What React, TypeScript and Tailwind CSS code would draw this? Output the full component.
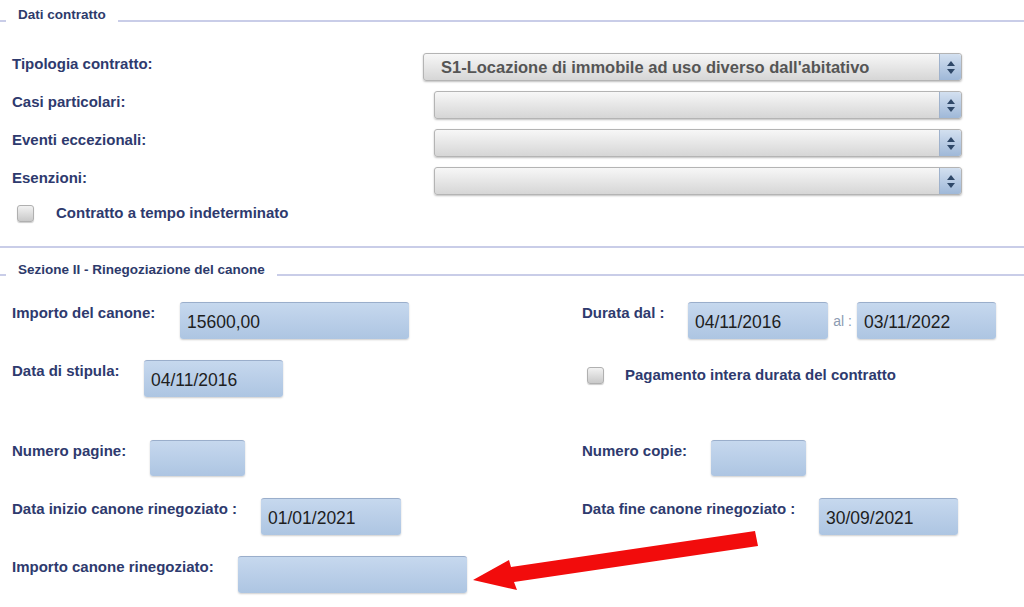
const font = { fontFamily: '"Liberation Sans", Arial, sans-serif' };

function Legend({ text, top, line }: { text: string; top: string; line: string }) {
  return (
    <div className="flex h-[28px] items-start">
      <div className={`${line} h-[2px] w-[6px] bg-[#c9cde8]`} />
      <div className={`${top} px-3 text-[13.5px] font-bold leading-[14px] text-[#2d3a6b]`}>{text}</div>
      <div className={`${line} h-[2px] flex-1 bg-[#c9cde8]`} />
    </div>
  );
}

function Select({ value, width }: { value?: string; width: string }) {
  return (
    <div className={`${width} flex h-[28px] rounded-[3px] border border-[#b4b4b4] bg-linear-to-b from-[#f7f7f7] to-[#d6d6d6] shadow-[0_1px_2px_rgba(0,0,0,0.25)]`}>
      <div className="flex flex-1 items-center pl-[17px] text-[16.5px] font-bold text-[#555]">{value}</div>
      <div className="flex w-[22px] flex-col items-center justify-center gap-[3px] rounded-r-[3px] border-l border-[#9fb2cc] bg-linear-to-b from-[#d3e0f0] to-[#9fb8d8]">
        <div className="h-0 w-0 border-x-[4px] border-b-[5px] border-x-transparent border-b-[#2f4868]" />
        <div className="h-0 w-0 border-x-[4px] border-t-[5px] border-x-transparent border-t-[#2f4868]" />
      </div>
    </div>
  );
}

function Checkbox() {
  return (
    <div className="h-[17px] w-[17px] shrink-0 rounded-[3px] border border-[#b0b0b0] bg-linear-to-b from-[#f2f2f2] to-[#c9c9c9] shadow-[0_1px_1px_rgba(0,0,0,0.2)]" />
  );
}

function Input({ value, width, height = 'h-[37px]' }: { value?: string; width: string; height?: string }) {
  return (
    <div className={`${width} ${height} flex items-center rounded-[3px] border-t border-[#9aaecb] bg-linear-to-b from-[#c6d8ee] to-[#adc5e2] pl-[7px] pt-[2px] text-[17.5px] text-[#1e1e1e] shadow-[0_1px_2px_rgba(0,0,0,0.2)]`}>
      {value}
    </div>
  );
}

function Label({ text, width }: { text: string; width: string }) {
  return <div className={`${width} shrink-0 pt-[3px] text-[15px] font-bold leading-4 text-[#2e3a6e]`}>{text}</div>;
}

export default function App() {
  return (
    <div className="relative h-[607px] w-[1024px] overflow-hidden bg-white" style={font}>
      <Legend text="Dati contratto" top="mt-[8px]" line="mt-[20px]" />

      {/* Dati contratto */}
      <div className="mt-[25px] flex flex-col gap-[10px] pl-3">
        <div className="flex">
          <Label text="Tipologia contratto:" width="w-[411px]" />
          <Select width="w-[539px]" value="S1-Locazione di immobile ad uso diverso dall'abitativo" />
        </div>
        <div className="flex">
          <Label text="Casi particolari:" width="w-[422px]" />
          <Select width="w-[528px]" />
        </div>
        <div className="flex">
          <Label text="Eventi eccezionali:" width="w-[422px]" />
          <Select width="w-[528px]" />
        </div>
        <div className="flex">
          <Label text="Esenzioni:" width="w-[422px]" />
          <Select width="w-[528px]" />
        </div>
      </div>
      <div className="mt-[10px] flex h-[17px] items-center pl-[17px]">
        <Checkbox />
        <div className="ml-[22px] text-[15px] font-bold text-[#2e3a6e]">Contratto a tempo indeterminato</div>
      </div>

      <div className="mt-[24px] h-[2px] bg-[#c9cde8]" />
      <Legend text="Sezione II - Rinegoziazione del canone" top="mt-[15px]" line="mt-[26px]" />

      {/* Sezione II */}
      <div className="mt-[26px] flex">
        <div className="flex w-[582px] pl-3">
          <Label text="Importo del canone:" width="w-[168px]" />
          <Input value="15600,00" width="w-[229px]" />
        </div>
        <div className="flex">
          <Label text="Durata dal :" width="w-[106px]" />
          <Input value="04/11/2016" width="w-[140px]" />
          <div className="flex w-[29px] items-center justify-center pt-[2px] text-[14px] text-[#8c9bb2]">al :</div>
          <Input value="03/11/2022" width="w-[139px]" />
        </div>
      </div>

      <div className="mt-[21px] flex">
        <div className="flex w-[582px] pl-3">
          <Label text="Data di stipula:" width="w-[132px]" />
          <Input value="04/11/2016" width="w-[139px]" />
        </div>
        <div className="mt-[7px] flex h-[17px] items-center pl-[5px]">
          <Checkbox />
          <div className="ml-[21px] text-[15px] font-bold text-[#2e3a6e]">Pagamento intera durata del contratto</div>
        </div>
      </div>

      <div className="mt-[43px] flex">
        <div className="flex w-[582px] pl-3">
          <Label text="Numero pagine:" width="w-[138px]" />
          <Input width="w-[95px]" height="h-[36px]" />
        </div>
        <div className="flex">
          <Label text="Numero copie:" width="w-[129px]" />
          <Input width="w-[95px]" height="h-[36px]" />
        </div>
      </div>

      <div className="mt-[22px] flex">
        <div className="flex w-[582px] pl-3">
          <Label text="Data inizio canone rinegoziato :" width="w-[249px]" />
          <Input value="01/01/2021" width="w-[140px]" />
        </div>
        <div className="flex">
          <Label text="Data fine canone rinegoziato :" width="w-[237px]" />
          <Input value="30/09/2021" width="w-[139px]" />
        </div>
      </div>

      <div className="mt-[21px] flex pl-3">
        <Label text="Importo canone rinegoziato:" width="w-[226px]" />
        <Input width="w-[229px]" />
      </div>

      {/* red annotation arrow */}
      <svg className="pointer-events-none absolute left-0 top-0" width="1024" height="607" viewBox="0 0 1024 607">
        <polygon
          points="755,531 511,567 509,560 473,580 517,590 514,582 758,546"
          fill="#f20c0c"
        />
      </svg>
    </div>
  );
}
